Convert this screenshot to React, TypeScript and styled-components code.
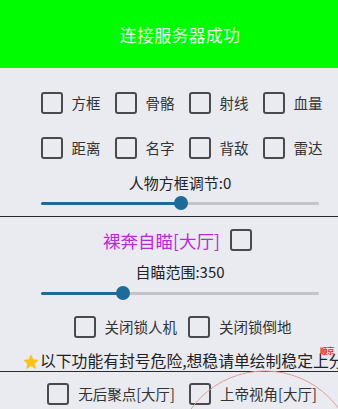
import React from "react";
import styled, { createGlobalStyle } from "styled-components";

const Global = createGlobalStyle`
  html, body { margin: 0; padding: 0; }
  body {
    width: 338px; height: 409px; overflow: hidden;
    background: #e9ebf1;
    font-family: "Noto Sans CJK SC", "Noto Sans", sans-serif;
  }
`;

const Page = styled.div`
  position: relative;
  width: 338px;
  height: 409px;
  overflow: hidden;
  background: #e9ebf1;
`;

const Header = styled.header`
  height: 68px;
  background: #00fc00;
  display: flex;
  align-items: center;
  justify-content: center;
  padding-left: 22px;
  color: #e6ffe6;
  font-size: 17px;
  letter-spacing: 0.2px;
`;

const Section = styled.section<{ $pt: number }>`
  display: flex;
  flex-direction: column;
  align-items: center;
  padding-left: 22px;
  padding-top: ${(p) => p.$pt}px;
`;

const Divider = styled.div<{ $mt: number }>`
  height: 1px;
  background: #2a2a2a;
  margin-top: ${(p) => p.$mt}px;
`;

const Row = styled.div<{ $mt?: number; $gap: number; $shift?: number }>`
  display: flex;
  align-items: center;
  height: 22px;
  gap: ${(p) => p.$gap}px;
  margin-top: ${(p) => p.$mt ?? 0}px;
  margin-left: ${(p) => p.$shift ?? 0}px;
`;

const Item = styled.label`
  display: flex;
  align-items: center;
  gap: 9px;
`;

const Box = styled.span`
  box-sizing: border-box;
  width: 22px;
  height: 22px;
  border: 2.5px solid #4a4a4c;
  border-radius: 3px;
  display: inline-block;
`;

const Label = styled.span`
  font-size: 14.5px;
  color: #333;
  white-space: nowrap;
  line-height: 22px;
`;

const Caption = styled.div<{ $mt: number }>`
  font-size: 15px;
  color: #222;
  line-height: 20px;
  height: 20px;
  margin-top: ${(p) => p.$mt}px;
  white-space: nowrap;
`;

const PurpleRow = styled.div`
  display: flex;
  align-items: center;
  gap: 10px;
  height: 24px;
  margin-right: 5px;
`;

const Purple = styled.span`
  font-size: 17.5px;
  color: #b82ad6;
  white-space: nowrap;
`;

const SliderWrap = styled.div<{ $mt: number }>`
  position: relative;
  width: 278px;
  height: 16px;
  margin-top: ${(p) => p.$mt}px;
  display: flex;
  align-items: center;
`;

const Track = styled.div`
  width: 100%;
  height: 3px;
  background: #c3c4c9;
  border-radius: 2px;
  position: relative;
`;

const Fill = styled.div`
  position: absolute;
  left: 0;
  top: 0;
  height: 3px;
  background: #1d6b98;
  border-radius: 2px;
`;

const Thumb = styled.div`
  position: absolute;
  top: 50%;
  width: 14px;
  height: 14px;
  border-radius: 50%;
  background: #1d6b98;
  transform: translate(-50%, -50%);
`;

const WarnLine = styled.div`
  align-self: stretch;
  display: flex;
  align-items: center;
  height: 20px;
  margin-top: 12px;
  white-space: nowrap;
  overflow: visible;
  font-size: 15.8px;
  color: #222;
  position: relative;
`;

const Star = styled.svg`
  width: 18px;
  height: 18px;
  flex: none;
  margin-top: 3px;
`;

const Badge = styled.span`
  position: absolute;
  left: 298px;
  top: -5px;
  font-size: 7.5px;
  font-weight: 700;
  color: #e3201b;
  letter-spacing: -0.5px;
`;

const Ring = styled.svg`
  position: absolute;
  left: 0;
  top: 0;
  pointer-events: none;
`;

function Slider({ value, mt }: { value: number; mt: number }) {
  return (
    <SliderWrap $mt={mt}>
      <Track>
        <Fill style={{ width: `${value}%` }} />
      </Track>
      <Thumb style={{ left: `${value}%` }} />
    </SliderWrap>
  );
}

function Check({ text }: { text: string }) {
  return (
    <Item>
      <Box />
      <Label>{text}</Label>
    </Item>
  );
}

export default function App() {
  return (
    <Page>
      <Global />
      <Header>连接服务器成功</Header>
      <Section $pt={24}>
        <Row $gap={14} $shift={3}>
          <Check text="方框" />
          <Check text="骨骼" />
          <Check text="射线" />
          <Check text="血量" />
        </Row>
        <Row $gap={14} $mt={23} $shift={3}>
          <Check text="距离" />
          <Check text="名字" />
          <Check text="背敌" />
          <Check text="雷达" />
        </Row>
        <Caption $mt={14}>人物方框调节:0</Caption>
        <Slider value={50.4} mt={2} />
      </Section>
      <Divider $mt={5} />
      <Section $pt={11}>
        <PurpleRow>
          <Purple>裸奔自瞄[大厅]</Purple>
          <Box />
        </PurpleRow>
        <Caption $mt={10}>自瞄范围:350</Caption>
        <Slider value={29.5} mt={3} />
        <Row $gap={11} $mt={15} $shift={5}>
          <Check text="关闭锁人机" />
          <Check text="关闭锁倒地" />
        </Row>
        <WarnLine>
          <Star viewBox="0 0 24 24">
            <path
              d="M12 1.8l3.1 6.6 7.1.9-5.2 4.9 1.3 7.1L12 17.8l-6.3 3.5 1.3-7.1L1.8 9.3l7.1-.9z"
              fill="#f7c21c"
            />
          </Star>
          <span>以下功能有封号危险,想稳请单绘制稳定上分</span>
          <Badge>顺京</Badge>
        </WarnLine>
      </Section>
      <Divider $mt={1} />
      <Section $pt={11}>
        <Row $gap={14} $shift={4}>
          <Check text="无后聚点[大厅]" />
          <Check text="上帝视角[大厅]" />
        </Row>
      </Section>
      <Ring width="338" height="409" viewBox="0 0 338 409">
        <circle cx="265" cy="462" r="91" fill="none" stroke="#e39a9a" strokeWidth="1" />
      </Ring>
    </Page>
  );
}
